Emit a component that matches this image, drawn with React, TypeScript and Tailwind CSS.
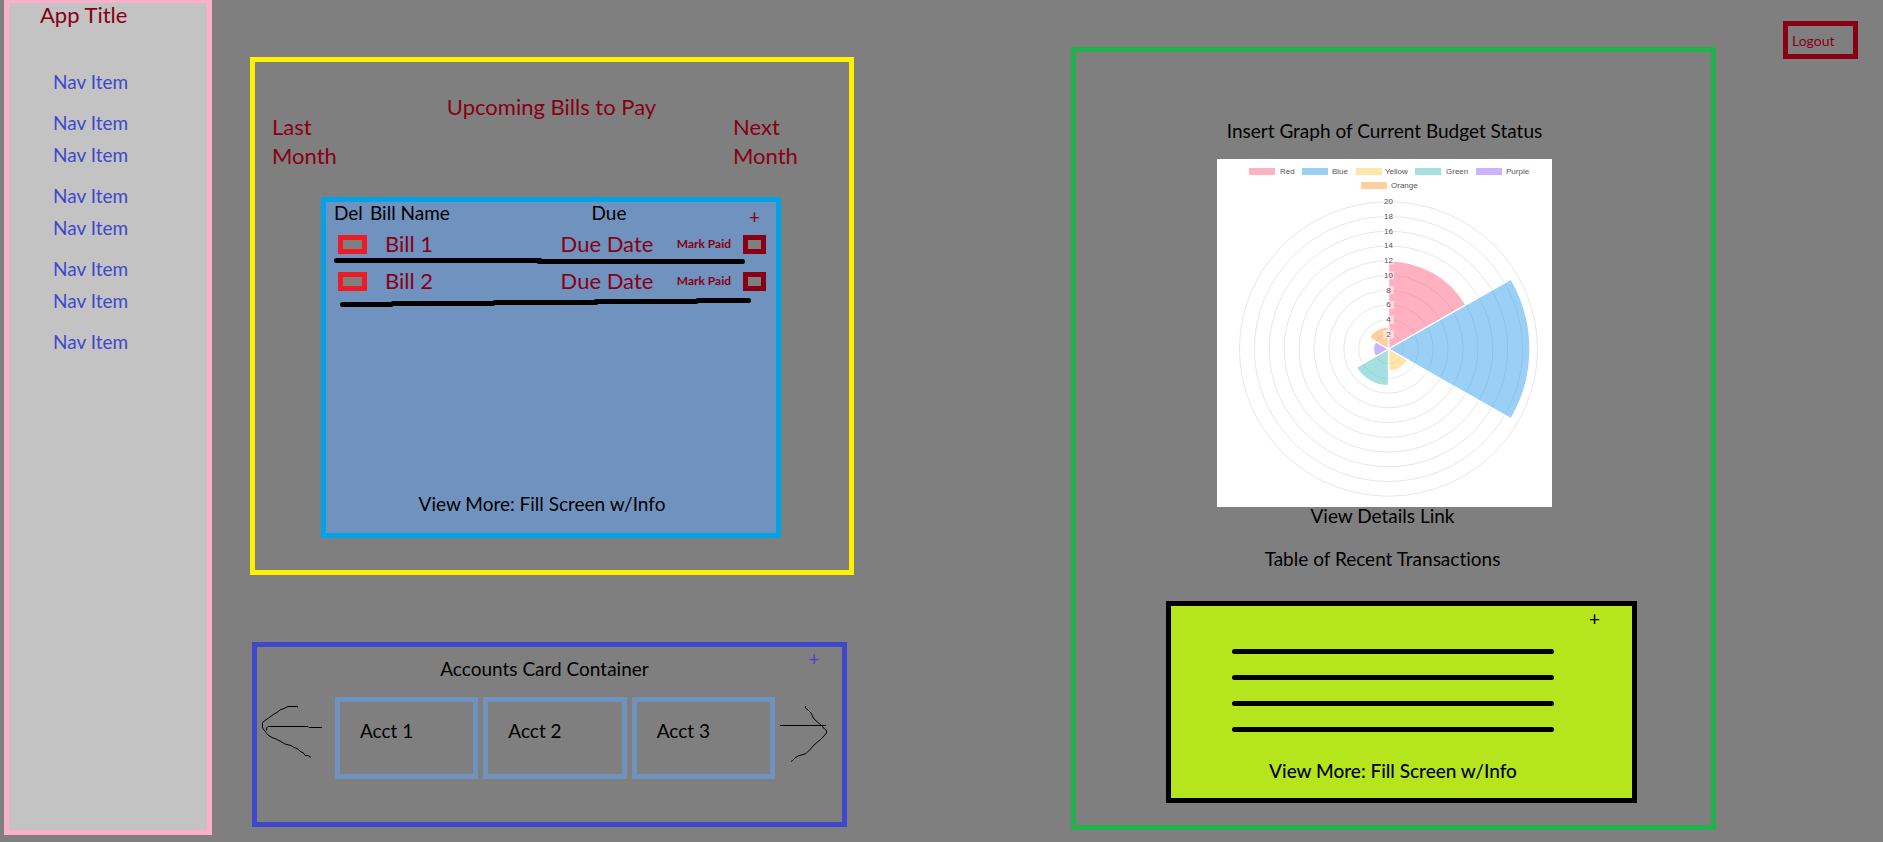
import React from "react";

const navGroups = [0, 1, 2, 3];

const slices = [
  { label: "Red", value: 12, color: "#ff6384", x: 32, tx: 63 },
  { label: "Blue", value: 19, color: "#36a2eb", x: 85, tx: 115 },
  { label: "Yellow", value: 3, color: "#ffcd56", x: 139, tx: 168 },
  { label: "Green", value: 5, color: "#4bc0c0", x: 198, tx: 229 },
  { label: "Purple", value: 2, color: "#9966ff", x: 259, tx: 289 },
  { label: "Orange", value: 3, color: "#ff9f40", x: 144, tx: 174 },
];

const CX = 171.5;
const CY = 190;
const UX = 7.45;
const UY = 7.36;

function slicePath(value: number, index: number) {
  const a0 = ((index * 60 - 90) * Math.PI) / 180;
  const a1 = (((index + 1) * 60 - 90) * Math.PI) / 180;
  const rx = value * UX;
  const ry = value * UY;
  return `M${CX} ${CY}L${CX + rx * Math.cos(a0)} ${CY + ry * Math.sin(a0)}A${rx} ${ry} 0 0 1 ${CX + rx * Math.cos(a1)} ${CY + ry * Math.sin(a1)}Z`;
}

function PolarChart() {
  const rings = [2, 4, 6, 8, 10, 12, 14, 16, 18, 20];
  return (
    <svg viewBox="0 0 335 348" className="block w-[335px] max-w-full bg-white" role="img" aria-label="Budget status">
      {rings.map((r) => (
        <ellipse key={r} cx={CX} cy={CY} rx={r * UX} ry={r * UY} fill="none" stroke="#000" strokeOpacity="0.1" />
      ))}
      {slices.map((s, i) => (
        <path key={s.label} d={slicePath(s.value, i)} fill={s.color} fillOpacity="0.5" stroke="#fff" strokeWidth="1.4" />
      ))}
      <g fontFamily="'Liberation Sans', Arial, sans-serif" fontSize="8" fill="#555">
        {rings.map((r) => (
          <g key={r}>
            <rect x={CX - 5.5} y={CY - r * UY - 4} width="11" height="8" fill="#fff" fillOpacity="0.5" />
            <text x={CX} y={CY - r * UY + 2.5} textAnchor="middle">
              {r}
            </text>
          </g>
        ))}
        {slices.map((s, i) => (
          <g key={s.label}>
            <rect x={s.x} y={i === 5 ? 23 : 9} width="26" height="7" fill={s.color} fillOpacity="0.5" />
            <text x={s.tx} y={i === 5 ? 29 : 15}>
              {s.label}
            </text>
          </g>
        ))}
      </g>
    </svg>
  );
}

function BillRow({ n, height }: { n: number; height: string }) {
  return (
    <tr className={height}>
      <td className="pl-3">
        <button
          type="button"
          aria-label={`Delete bill ${n}`}
          className="block h-[19px] w-[29px] border-[5px] border-[#ed1c24] bg-[#7f7f7f]"
        />
      </td>
      <td className="pl-[15px] text-[22px] leading-6 text-[#880015]">Bill {n}</td>
      <td className="pr-1 text-center text-[22px] leading-6 text-[#880015]">Due Date</td>
      <td>
        <div className="flex items-center justify-end gap-3 pr-[10px]">
          <label htmlFor={`paid-${n}`} className="whitespace-nowrap text-[12px] font-bold leading-4 text-[#880015]">
            Mark Paid
          </label>
          <input
            id={`paid-${n}`}
            type="checkbox"
            className="h-[19px] w-[23px] shrink-0 appearance-none border-[5px] border-[#880015] bg-[#7f7f7f]"
          />
        </div>
      </td>
    </tr>
  );
}

function BillsPanel() {
  return (
    <section className="border-[5px] border-[#fff200] pb-8">
      <header className="flex items-start justify-between pl-[17px] pr-[44px] pt-[30px] text-[22px] leading-[29px] text-[#880015]">
        <button type="button" className="mt-5 w-[72px] text-left">
          Last Month
        </button>
        <h2 className="pl-[26px]">Upcoming Bills to Pay</h2>
        <button type="button" className="mt-5 w-[72px] text-left">
          Next Month
        </button>
      </header>
      <div className="ml-[66px] mr-[68px] mt-[27px] border-[5px] border-[#00a2e8] bg-[#7092be]">
        <table className="w-full table-fixed border-collapse">
          <colgroup>
            <col className="w-[44px]" />
            <col />
            <col className="w-[116px]" />
            <col className="w-[109px]" />
          </colgroup>
          <thead>
            <tr className="h-[29px] text-left text-[19px] leading-[22px]">
              <th className="pl-2 align-top font-normal">Del</th>
              <th className="align-top font-normal">Bill Name</th>
              <th className="text-center align-top font-normal">Due</th>
              <th className="pr-[16px] text-right font-normal">
                <button type="button" aria-label="Add bill" className="text-[#880015]">
                  +
                </button>
              </th>
            </tr>
          </thead>
          <tbody>
            <BillRow n={1} height="h-[26px]" />
            <tr>
              <td colSpan={4} className="pl-2">
                <svg viewBox="0 0 412 8" className="block h-2 w-[412px]" aria-hidden="true">
                  <path d="M2.500 3.500H206M205 4.500H408.500" stroke="#000" strokeWidth="5" strokeLinecap="round" />
                </svg>
              </td>
            </tr>
            <BillRow n={2} height="h-[32px]" />
            <tr>
              <td colSpan={4} className="pl-[14px]">
                <svg viewBox="0 0 412 12" className="block h-3 w-[412px]" aria-hidden="true">
                  <path
                    d="M2.500 7.500H51M53 6.500H153M155 5.500H256M256 4.500H356M358 3.500H408.500"
                    stroke="#000"
                    strokeWidth="5"
                    strokeLinecap="round"
                  />
                </svg>
              </td>
            </tr>
          </tbody>
        </table>
        <div className="pb-[17px] pr-[18px] pt-[183px] text-center text-[19px] leading-6">
          <button type="button">View More: Fill Screen w/Info</button>
        </div>
      </div>
    </section>
  );
}

function AccountsPanel() {
  return (
    <section className="ml-[2px] mr-[7px] mt-[67px] border-[5px] border-[#3f48cc] pb-[43px]">
      <div className="flex items-start text-[19px] leading-6">
        <h2 className="grow pl-[46px] pt-[10px] text-center">Accounts Card Container</h2>
        <button type="button" aria-label="Add account" className="w-14 text-center text-[#3f48cc]">
          +
        </button>
      </div>
      <div className="mt-4 flex items-start justify-between pl-1 pr-[14px]">
        <button type="button" aria-label="Previous accounts" className="pt-2">
          <svg viewBox="0 0 62 54" className="block h-[54px] w-[62px]" fill="none" stroke="#000">
            <path d="M36.500 2.500V1L35 1.500H27L24 3 19 5 16 7.500 13 9 9 12 4 15.500 1.500 17.500V23L5 27.500 7 30 11 32.500 15 34 19 36 24 39 30 40.500 33 42.500 36 43.500 39 46 43 48.500 44 50.500H47L50 52.500" />
            <path d="M5.500 25.500V23L7 21.500H47L48 22.500H61" />
          </svg>
        </button>
        <ul className="flex min-w-0 grow gap-[5px] pl-[12px] pr-[5px]">
          {[1, 2, 3].map((n) => (
            <li key={n} className="h-[82px] grow border-[5px] border-[#7092be] pl-5 pt-[17px] text-[19px] leading-6">
              Acct {n}
            </li>
          ))}
        </ul>
        <button type="button" aria-label="Next accounts" className="pt-2">
          <svg viewBox="0 0 48 58" className="block h-[58px] w-[48px]" fill="none" stroke="#000">
            <path d="M25.500 1V3L28 5 31 8 34 14 38 17.500 42 21 44.500 24 46.500 25.500V28L43 32 40 35 34 40 30 44.500 26 48.500 23 49.500 18 51 15 53 12.500 55.500 11 56.500" />
            <path d="M0 20.500H46" />
          </svg>
        </button>
      </div>
    </section>
  );
}

function BudgetPanel() {
  return (
    <section className="self-start border-[5px] border-[#22b14c] pb-[22px] text-[19px] leading-6">
      <div className="flex flex-col items-center pr-[18px] pt-[67px]">
        <h2>Insert Graph of Current Budget Status</h2>
        <div className="mt-4">
          <PolarChart />
        </div>
        <a href="#details" className="-mt-[3px] pr-1">
          View Details Link
        </a>
        <h2 className="mt-[19px] pr-1">Table of Recent Transactions</h2>
      </div>
      <div className="ml-[90px] mr-[74px] mt-[30px] border-[5px] border-black bg-[#b5e61d] pb-[15px]">
        <div className="flex justify-end pr-8">
          <button type="button" aria-label="Add transaction" className="pt-[1px]">
            +
          </button>
        </div>
        <div className="mt-[18px] flex flex-col gap-[21px] pl-[61px] pr-[78px]">
          {[0, 1, 2, 3].map((n) => (
            <hr key={n} className="h-[5px] rounded-full border-0 bg-black" />
          ))}
        </div>
        <div className="mt-[27px] pr-[17px] text-center">
          <button type="button" className="font-medium">
            View More: Fill Screen w/Info
          </button>
        </div>
      </div>
    </section>
  );
}

export default function App() {
  return (
    <div className="flex min-h-screen items-start bg-[#7f7f7f] pl-1 font-[Lato,Carlito,Calibri,sans-serif] text-black [font-variant-ligatures:none]">
      <aside className="min-h-[835px] w-52 shrink-0 border-[5px] border-t-[3px] border-[#ffaec9] bg-[#c3c3c3]">
        <h1 className="pl-[31px] text-[22px] leading-6 text-[#880015]">App Title</h1>
        <nav className="pl-11 pt-[43px] text-[19px] text-[#3f48cc]">
          {navGroups.map((g) => (
            <ul key={g}>
              <li className="h-[41px] leading-6">
                <a href="#nav">Nav Item</a>
              </li>
              <li className="h-8 leading-6">
                <a href="#nav">Nav Item</a>
              </li>
            </ul>
          ))}
        </nav>
      </aside>
      <main className="grid min-w-0 grow grid-cols-[604fr_645fr] gap-x-[217px] pl-[38px] pr-[67px] pt-[47px]">
        <div className="pt-[10px]">
          <BillsPanel />
          <AccountsPanel />
        </div>
        <BudgetPanel />
      </main>
      <div className="shrink-0 pr-[25px] pt-[21px]">
        <button
          type="button"
          className="h-[38px] w-[75px] border-[5px] border-[#880015] pl-1 pt-[2px] text-left text-[14px] leading-5 text-[#880015]"
        >
          Logout
        </button>
      </div>
    </div>
  );
}
